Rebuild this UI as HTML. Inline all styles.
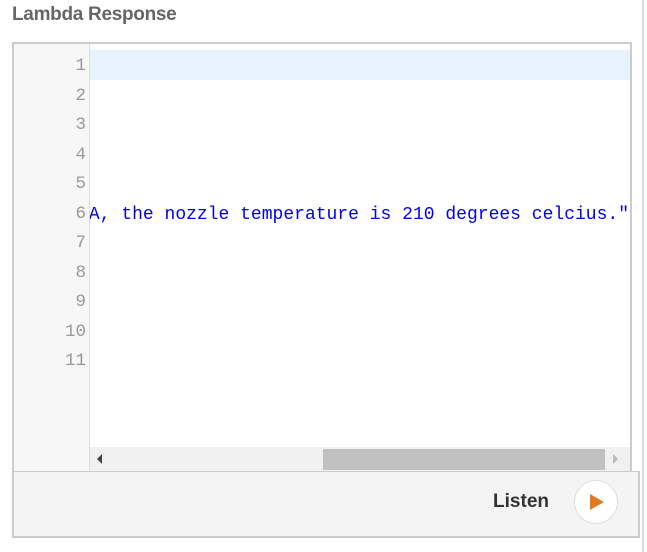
<!DOCTYPE html>
<html><head><style>
body{margin:0;width:647px;height:552px;background:#fff;position:relative;overflow:hidden;font-family:"Liberation Sans",sans-serif}
.t{position:absolute;left:12px;top:4px;font-size:19px;font-weight:bold;color:#666;letter-spacing:-0.3px}
.vr{position:absolute;left:642px;top:0;width:2px;height:552px;background:#ddd}
.ed{position:absolute;left:12px;top:42px;width:616px;height:429px;border:2px solid #ccc;border-bottom:none;background:#fff;overflow:hidden}
.gut{position:absolute;left:0;top:0;width:75px;height:429px;background:#f7f7f7;border-right:1px solid #ddd}
.hl{position:absolute;left:76px;top:6px;right:0;height:30px;background:#e8f2fe}
.ln{position:absolute;left:0;width:72px;text-align:right;font-family:"Liberation Mono",monospace;font-size:17.5px;color:#999;line-height:29.5px;top:8px}
.code{position:absolute;left:76px;right:0;top:156px;height:30px;overflow:hidden;font-family:"Liberation Mono",monospace;font-size:18px;color:#0000ee;line-height:30px}
.code span{position:absolute;right:1px;white-space:pre}
.sb{position:absolute;left:76px;right:0;top:403px;height:24px;background:#f0f0f0}
.th{position:absolute;left:233px;top:2px;width:282px;height:21px;background:#c0c0c0}
.bot{position:absolute;left:12px;top:471px;width:624px;height:64px;border:2px solid #ccc;border-top:1px solid #ccc;background:#f4f4f4}
.lis{position:absolute;right:89px;top:19px;font-size:19px;font-weight:bold;color:#333}
.pl{position:absolute;left:560px;top:8px;width:42px;height:42px;border-radius:50%;background:#fff;border:1px solid #ddd}
</style></head><body>
<div class="t">Lambda Response</div>
<div class="vr"></div>
<div class="ed">
<div class="gut"></div>
<div class="hl"></div>
<div class="ln">1<br>2<br>3<br>4<br>5<br>6<br>7<br>8<br>9<br>10<br>11</div>
<div class="code"><span>"...A, the nozzle temperature is 210 degrees celcius."</span></div>
<div class="sb">
<svg style="position:absolute;left:7px;top:7px" width="6" height="10"><path d="M5 0L0 5L5 10Z" fill="#444"/></svg>
<div class="th"></div>
<svg style="position:absolute;left:523px;top:7px" width="6" height="10"><path d="M0 0L5 5L0 10Z" fill="#bbb"/></svg>
</div>
</div>
<div class="bot">
<div class="lis">Listen</div>
<div class="pl"><svg style="position:absolute;left:15px;top:13px" width="15" height="16"><path d="M0 0L14 8L0 16Z" fill="#e07b20"/></svg></div>
</div>
</body></html>
